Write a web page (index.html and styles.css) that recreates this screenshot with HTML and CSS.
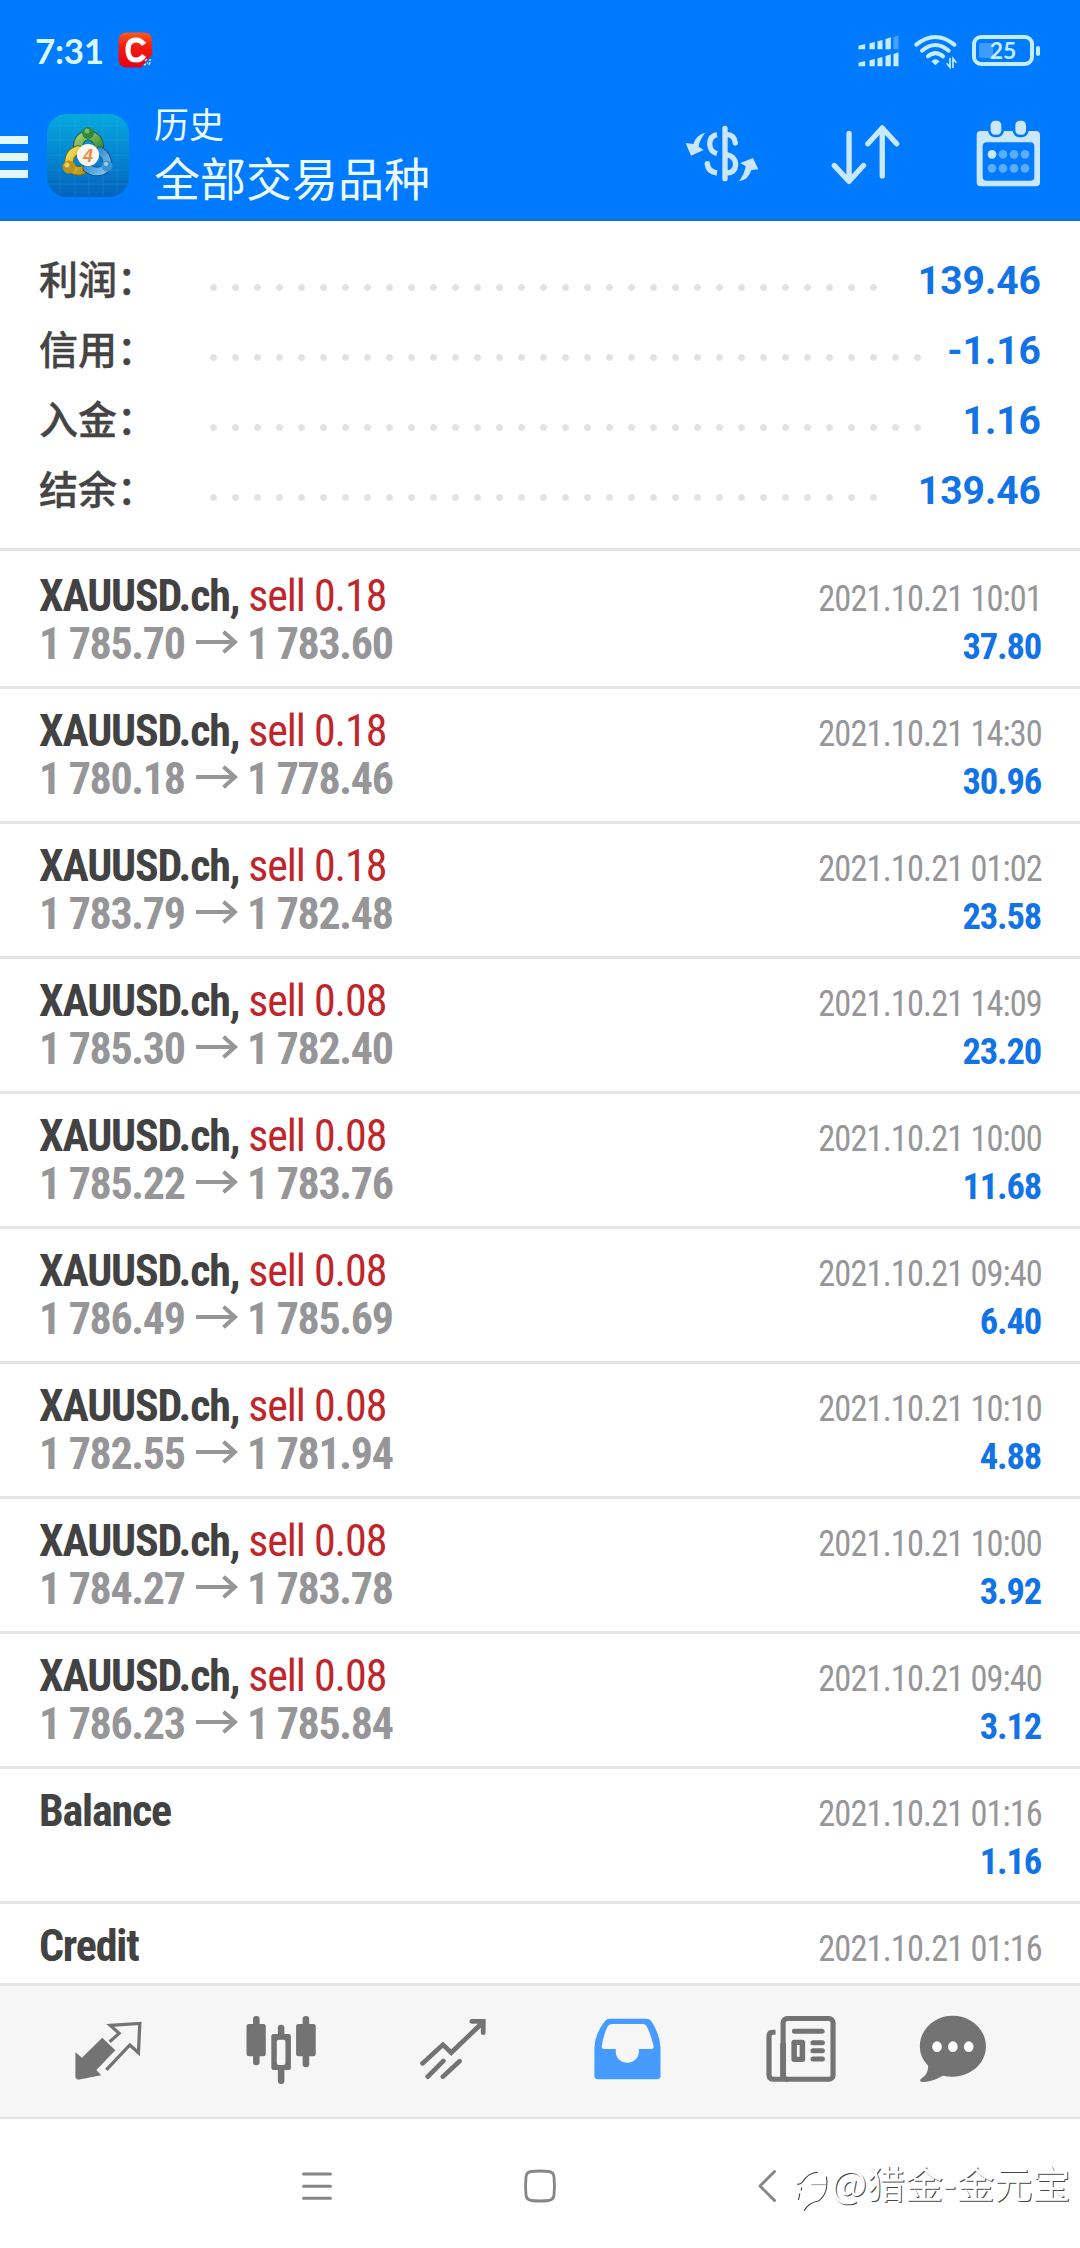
FILE: index.html
```html
<!DOCTYPE html>
<html lang="zh-CN">
<head>
<meta charset="utf-8">
<title>历史</title>
<link rel="stylesheet" href="styles.css">
</head>
<body>
<svg class="defs" aria-hidden="true"><symbol id="arrow" viewBox="0 0 42 24"><path d="M0 12H39M27.500 1.800L39 12L27.500 22.200" fill="none" stroke="#969698" stroke-width="4"/></symbol></svg>
<header class="header">
  <div class="status">
    <span class="clock">7:31</span>
    <svg class="notif" viewBox="0 0 35 36"><defs><linearGradient id="r" x1="0" y1="0" x2="0" y2="1"><stop offset="0" stop-color="#fb5a1e"/><stop offset=".4" stop-color="#f31c10"/><stop offset="1" stop-color="#e60012"/></linearGradient></defs><path d="M9 0.500H26Q34 .5 34 9V23L23 35.500H9Q.5 35.500 .5 27V9Q.5 .5 9 .5Z" fill="url(#r)"/><path d="M26 12.500Q23 8 18 8Q10 8 10 17.500Q10 28 18 28Q23 28 26 23.500" fill="none" stroke="#fff" stroke-width="5"/><path d="M27 29l2-2M31 28l2 0M26 33l2-1M31 33l1-3M29 31h1" stroke="#cfe6ff" stroke-width="1.500"/></svg>
    <svg class="signal" viewBox="656 104 122 96"><g fill="#c4edff"><path d="M657 136l20-5v16h-20zM690 129l16-4v22h-16zM714 123l15-4v28h-15zM738 116l16-5v36h-16zM657 187l20-5v16h-20zM690 180l16-4v22h-16zM714 174l15-4v28h-15zM738 167l16-5v36h-16zM762 161l15-5v42h-15z"/><path d="M762 110l15-5v42h-15z" opacity=".35"/></g></svg>
    <svg class="wifi" viewBox="824 102 129 105"><g fill="none" stroke="#c4edff" stroke-width="12" stroke-linecap="round"><path d="M831 134Q888 88 945 134M848 152Q888 118 928 152M866 169Q888 150 911 169"/></g><path d="M876 184Q888 172 901 184L888 196Z" fill="#c4edff"/><path d="M932 174V202L922 190M941 204V176L951 188" fill="none" stroke="#c4edff" stroke-width="5"/></svg>
    <svg class="battery" viewBox="0 0 69 32"><rect x="2" y="2" width="58" height="27" rx="7" fill="none" stroke="#c4edff" stroke-width="4"/><rect x="7" y="8" width="14" height="15" rx="2" fill="#3d9cff"/><rect x="64" y="11" width="4" height="10" rx="2" fill="#c4edff"/><text class="battery-text" x="31" y="24" text-anchor="middle">25</text></svg>
  </div>
  <div class="toolbar">
    <div class="burger"><i></i><i></i><i></i></div>
    <svg class="logo" viewBox="0 0 82 83"><defs><linearGradient id="lg" x1="0" y1="0" x2="0" y2="1"><stop offset="0" stop-color="#06a9e0"/><stop offset="1" stop-color="#0563be"/></linearGradient><linearGradient id="gg" x1="0" y1="0" x2="1" y2="1"><stop offset="0" stop-color="#a4cf72"/><stop offset="1" stop-color="#2f8a35"/></linearGradient><linearGradient id="yg" x1="0" y1="0" x2="1" y2="1"><stop offset="0" stop-color="#f4e25d"/><stop offset="1" stop-color="#b58d12"/></linearGradient><linearGradient id="bg" x1="0" y1="0" x2="1" y2="1"><stop offset="0" stop-color="#1f78bf"/><stop offset="1" stop-color="#7cc4ee"/></linearGradient></defs>
    <rect width="82" height="83" rx="20" fill="url(#lg)"/><path d="M13 2V81M28 1V82M42 1V82M56 1V82M70 2V81M1 12H81M1 26H81M1 41H81M1 56H81M1 70H81" stroke="#47c1ec" stroke-opacity=".16" stroke-width="1" fill="none"/>
    <g fill="none" stroke-linecap="round"><path d="M31 36Q30 23 41 21Q53 23 52 36" stroke="#1c5e3a" stroke-width="10"/><path d="M31 36Q30 23 41 21Q53 23 52 36" stroke="url(#gg)" stroke-width="8"/><path d="M22 52Q21 39 31 36M24 54Q32 60 39 54" stroke="#6e671d" stroke-width="9.500"/><path d="M22 52Q21 39 31 36M24 54Q32 60 39 54" stroke="url(#yg)" stroke-width="7.500"/><path d="M60 51Q61 42 53 37M59 54Q51 61 40 54" stroke="#124f8c" stroke-width="9.500"/><path d="M60 51Q61 42 53 37M59 54Q51 61 40 54" stroke="url(#bg)" stroke-width="7.500"/></g>
    <circle cx="41" cy="19" r="6" fill="#2f8a3a"/><circle cx="40" cy="17" r="2.500" fill="#79b967"/><circle cx="22" cy="53" r="6.500" fill="#b9921f"/><circle cx="20" cy="51" r="2.500" fill="#e8cf62"/><circle cx="60" cy="52" r="5.500" fill="#3f93cf"/><circle cx="59" cy="50" r="2" fill="#9bd5f5"/><circle cx="41" cy="41" r="11" fill="#fbf7f2"/><text class="logo-text" x="41" y="47.500" text-anchor="middle">4</text></svg>
    <div class="titles"><div class="title-small">历史</div><div class="title-big">全部交易品种</div></div>
    <svg class="currency" viewBox="135 374 222 174"><g fill="none" stroke="#cbe6ff" stroke-width="16"><path d="M231 403Q209 407 209 431Q210 454 231 460M202 490Q204 514 231 518"/><path d="M202 490V491M286 428Q284 404 260 402M260 463Q287 469 287 493Q285 517 260 518M255 384V535" stroke-linecap="round"/></g><path d="M196 397Q168 404 160 431L137 428L153 466L191 449L176 439Q179 416 196 397ZM297 543Q326 538 334 509L355 507L339 473L301 488L317 498Q313 522 297 543Z" fill="#cbe6ff"/></svg>
    <svg class="sort" viewBox="572 372 206 182"><path d="M626 400V543M582 496L626 543L669 496M725 527V384M682 431L725 384L768 431" fill="none" stroke="#c8e8ff" stroke-width="16" stroke-linecap="round" stroke-linejoin="round"/></svg>
    <svg class="calendar" viewBox="1008 360 195 201"><path fill-rule="evenodd" fill="#cbe6ff" d="M1022 393H1188Q1200 393 1200 405V546Q1200 559 1188 559H1022Q1010 559 1010 546V405Q1010 393 1022 393ZM1040 427Q1028 427 1028 439V530Q1028 542 1040 542H1171Q1183 542 1183 530V439Q1183 427 1171 427Z"/><g fill="#cbe6ff" stroke="#007aff" stroke-width="8"><rect x="1048" y="358" width="40" height="50" rx="17"/><rect x="1122" y="358" width="40" height="50" rx="17"/></g><circle cx="1056" cy="463" r="13" fill="#cbe6ff"/><g fill="#5cadff"><circle cx="1089" cy="463" r="13"/><circle cx="1122" cy="463" r="13"/><circle cx="1155" cy="463" r="13"/><circle cx="1056" cy="505" r="13"/><circle cx="1089" cy="505" r="13"/><circle cx="1122" cy="505" r="13"/><circle cx="1155" cy="505" r="13"/></g></svg>
  </div>
</header>
<section class="summary">
  <div class="sum"><span class="label">利润：</span><span class="dots"></span><span class="value">139.46</span></div>
  <div class="sum"><span class="label">信用：</span><span class="dots wide"></span><span class="value">-1.16</span></div>
  <div class="sum"><span class="label">入金：</span><span class="dots wide"></span><span class="value">1.16</span></div>
  <div class="sum"><span class="label">结余：</span><span class="dots"></span><span class="value">139.46</span></div>
</section>
<main class="list">
  <div class="item"><div class="left"><div class="name">XAUUSD.ch, <span class="sell">sell 0.18</span></div><div class="price"><span class="from">1 785.70</span><svg class="arrow"><use href="#arrow"/></svg><span>1 783.60</span></div></div><div class="right"><div class="date">2021.10.21 10:01</div><div class="profit">37.80</div></div></div>
  <div class="item"><div class="left"><div class="name">XAUUSD.ch, <span class="sell">sell 0.18</span></div><div class="price"><span class="from">1 780.18</span><svg class="arrow"><use href="#arrow"/></svg><span>1 778.46</span></div></div><div class="right"><div class="date">2021.10.21 14:30</div><div class="profit">30.96</div></div></div>
  <div class="item"><div class="left"><div class="name">XAUUSD.ch, <span class="sell">sell 0.18</span></div><div class="price"><span class="from">1 783.79</span><svg class="arrow"><use href="#arrow"/></svg><span>1 782.48</span></div></div><div class="right"><div class="date">2021.10.21 01:02</div><div class="profit">23.58</div></div></div>
  <div class="item"><div class="left"><div class="name">XAUUSD.ch, <span class="sell">sell 0.08</span></div><div class="price"><span class="from">1 785.30</span><svg class="arrow"><use href="#arrow"/></svg><span>1 782.40</span></div></div><div class="right"><div class="date">2021.10.21 14:09</div><div class="profit">23.20</div></div></div>
  <div class="item"><div class="left"><div class="name">XAUUSD.ch, <span class="sell">sell 0.08</span></div><div class="price"><span class="from">1 785.22</span><svg class="arrow"><use href="#arrow"/></svg><span>1 783.76</span></div></div><div class="right"><div class="date">2021.10.21 10:00</div><div class="profit">11.68</div></div></div>
  <div class="item"><div class="left"><div class="name">XAUUSD.ch, <span class="sell">sell 0.08</span></div><div class="price"><span class="from">1 786.49</span><svg class="arrow"><use href="#arrow"/></svg><span>1 785.69</span></div></div><div class="right"><div class="date">2021.10.21 09:40</div><div class="profit">6.40</div></div></div>
  <div class="item"><div class="left"><div class="name">XAUUSD.ch, <span class="sell">sell 0.08</span></div><div class="price"><span class="from">1 782.55</span><svg class="arrow"><use href="#arrow"/></svg><span>1 781.94</span></div></div><div class="right"><div class="date">2021.10.21 10:10</div><div class="profit">4.88</div></div></div>
  <div class="item"><div class="left"><div class="name">XAUUSD.ch, <span class="sell">sell 0.08</span></div><div class="price"><span class="from">1 784.27</span><svg class="arrow"><use href="#arrow"/></svg><span>1 783.78</span></div></div><div class="right"><div class="date">2021.10.21 10:00</div><div class="profit">3.92</div></div></div>
  <div class="item"><div class="left"><div class="name">XAUUSD.ch, <span class="sell">sell 0.08</span></div><div class="price"><span class="from">1 786.23</span><svg class="arrow"><use href="#arrow"/></svg><span>1 785.84</span></div></div><div class="right"><div class="date">2021.10.21 09:40</div><div class="profit">3.12</div></div></div>
  <div class="item"><div class="left"><div class="name">Balance</div></div><div class="right"><div class="date">2021.10.21 01:16</div><div class="profit">1.16</div></div></div>
  <div class="item"><div class="left"><div class="name">Credit</div></div><div class="right"><div class="date">2021.10.21 01:16</div></div></div>
</main>
<nav class="tabs">
  <svg viewBox="197.500 90 232.300 225" preserveAspectRatio="none"><path d="M297 173L335 211L280 270L294 286L226 299L219 293V217L238 233Z" fill="#737373"/><path d="M322 182L346 160L320 136L406 130L402 218L377 195L312 266" fill="none" stroke="#737373" stroke-width="9.500" stroke-linecap="square"/></svg>
  <svg viewBox="700 90 232.300 225" preserveAspectRatio="none"><g fill="#737373"><rect x="735" y="108" width="19" height="148" rx="9"/><rect x="716" y="132" width="56" height="97" rx="7"/><rect x="879" y="108" width="19" height="154" rx="9"/><rect x="860" y="132" width="57" height="97" rx="7"/><rect x="807" y="134" width="19" height="178" rx="9"/><rect x="788" y="162" width="57" height="108" rx="7"/></g><rect x="804" y="179" width="25" height="76" rx="6" fill="#f6f6f6"/></svg>
  <svg viewBox="1205 90 232.300 225" preserveAspectRatio="none"><g fill="none" stroke="#737373" stroke-width="14" stroke-linecap="round"><path d="M1230 250L1289 194L1313 218L1406 126M1373 124H1406V158M1245 290L1290 243M1289 290L1337 244"/></g></svg>
  <svg viewBox="139.400 90 232.300 225" preserveAspectRatio="none"><path fill-rule="evenodd" fill="#459bff" d="M202 116H308Q318 116 323 123Q348 162 350 203V288Q350 298 338 298H170Q158 298 158 288V203Q160 158 189 123Q194 116 202 116ZM209 132Q200 132 196 140Q184 165 179 200Q179 207 186 207H220V215A33 33 0 0 0 287 215V207H324Q331 207 330 199Q321 160 309 137Q306 132 299 132Z"/></svg>
  <svg viewBox="641.800 90 232.300 225" preserveAspectRatio="none"><g fill="none" stroke="#737373" stroke-width="15"><rect x="706" y="115.500" width="145" height="182" rx="12"/><path d="M684 157H676Q665 157 665 170V284Q665 298 680 298H720"/><path d="M706 190V297" stroke-width="17"/></g><g fill="none" stroke="#737373" stroke-width="15" stroke-linecap="round"><path d="M739 154H819M793 188H820M793 212H820M793 237H820"/></g><rect x="738" y="187" width="24" height="51" fill="none" stroke="#737373" stroke-width="16" stroke-linejoin="round"/></svg>
  <svg class="chat" viewBox="1083.200 90 232.300 225" preserveAspectRatio="none"><path d="M1198 107C1253 107 1295 149 1295 199C1295 251 1251 290 1198 290Q1183 290 1170 287Q1138 306 1108 306Q1101 303 1106 297Q1129 281 1127 257Q1103 233 1103 199C1103 149 1145 107 1198 107Z" fill="#737373"/><g fill="#fff"><ellipse cx="1153" cy="200" rx="14" ry="16"/><ellipse cx="1199" cy="200" rx="14" ry="16"/><ellipse cx="1245" cy="200" rx="14" ry="16"/></g></svg>
</nav>
<footer class="sysnav">
  <svg class="recent" viewBox="0 0 30 34"><path d="M1.500 5H28.500M1.500 17.200H28.500M1.500 29.300H28.500" stroke="#868686" stroke-width="3" stroke-linecap="round"/></svg>
  <svg class="home" viewBox="0 0 34 34"><path d="M8 2.500Q17 1.500 26 2.500Q30.500 3 31 8Q32 17 31 26Q30.500 30.500 26 31.500Q17 32.500 8 31.500Q3.500 30.500 3 26Q2 17 3 8Q3.500 3 8 2.500Z" fill="none" stroke="#868686" stroke-width="2.800"/></svg>
  <svg class="back" viewBox="0 0 20 34"><path d="M17.500 2.500L3 17L17.500 31.500" fill="none" stroke="#868686" stroke-width="3" stroke-linecap="round" stroke-linejoin="round"/></svg>
  <div class="mark"><svg class="swirl" viewBox="742 570 104 126" preserveAspectRatio="none"><g fill="none" stroke="#3a3a3a" stroke-width="3"><path d="M748 612Q754 615 763 607Q780 578 808 577M762 622L759 631M756 640L752 660M833 590Q840 640 810 663Q783 667 768 692"/><path d="M789 614H833" stroke="#999"/></g></svg><span>@猎金-金元宝</span></div>
</footer>
</body>
</html>
```
FILE: styles.css
```css
* { box-sizing: border-box; }
body { margin: 0; width: 1080px; height: 2248px; display: flex; flex-direction: column; overflow: hidden; background: #fff; font-family: Roboto, "Noto Sans CJK SC", sans-serif; }
svg { display: block; flex: none; }
.defs { width: 0; height: 0; position: absolute; }
.header { height: 221px; flex: none; background: #007aff; border-bottom: 2px solid #1a6fcb; color: #eafaff; }
.status { height: 102px; display: flex; align-items: flex-start; padding: 32px 39px 0 35px; }
.clock { width: 83px; font: 700 35px/36px Lato, sans-serif; letter-spacing: -0.3px; white-space: nowrap; color: #d8f8ff; }
.notif { width: 35px; height: 36px; }
.signal { width: 41px; height: 32px; margin: 3px 0 0 auto; }
.wifi { width: 43px; height: 35px; margin: 2px 0 0 15px; }
.battery { width: 69px; height: 32px; margin: 3px 0 0 15px; }
.battery-text { font: 700 23px Lato, sans-serif; fill: #c4edff; }
.toolbar { height: 117px; display: flex; align-items: flex-start; }
.burger { width: 28px; padding-top: 34px; display: flex; flex-direction: column; gap: 9px; }
.burger i { height: 8px; background: #e4f7ff; }
.logo { width: 82px; height: 83px; margin: 12px 0 0 19px; }
.logo-text { font: italic 700 18px "Liberation Sans", sans-serif; fill: #ef8b3a; }
.titles { margin-left: 25px; font-family: "Noto Sans CJK SC", sans-serif; font-weight: 400; white-space: nowrap; }
.title-small { font-size: 35px; line-height: 41px; }
.title-big { font-size: 46px; line-height: 66px; }
.currency { width: 74px; height: 58px; margin: 23px 0 0 auto; }
.sort { width: 69px; height: 61px; margin: 22px 0 0 72px; }
.calendar { width: 65px; height: 67px; margin: 18px 39px 0 76px; }
.summary { height: 330px; flex: none; padding: 24px 38px 0 39px; border-bottom: 3px solid #e5e5e5; }
.sum { height: 70px; display: flex; align-items: flex-start; }
.label { width: 164px; font: 500 39px/64px "Noto Sans CJK SC", sans-serif; color: #444; -webkit-text-stroke: 0.4px #444; white-space: nowrap; }
.dots { width: 682px; height: 7px; margin-top: 39px; background: radial-gradient(circle at 10.5px 3.500px, #e2e2e2 3px, transparent 3.800px) 0 0 / 22px 7px repeat-x; }
.dots.wide { width: 726px; }
.value { margin-left: auto; font: 700 39px/46px Roboto, sans-serif; padding: 13px 1px 0 0; color: #1273e6; white-space: nowrap; }
.list { flex: none; height: 1432px; padding-top: 3px; overflow: hidden; font-family: "Roboto Condensed", Roboto, sans-serif; font-stretch: 75%; }
.item { height: 135px; border-bottom: 3px solid #e5e5e5; padding: 18px 38px 0 39px; display: flex; justify-content: space-between; white-space: nowrap; }
.name { font-size: 44px; line-height: 48px; font-weight: 700; letter-spacing: -1.200px; color: #424242; }
.sell { font-weight: 400; letter-spacing: -1.050px; color: #bf262b; }
.price { display: flex; font-size: 44px; line-height: 48px; font-weight: 700; letter-spacing: -1.350px; color: #969698; }
.from { width: 157px; }
.arrow { width: 42px; height: 24px; margin: 10px 9px 0 0; }
.right { padding-top: 3px; text-align: right; font-size: 36.500px; line-height: 48px; }
.date { color: #969698; letter-spacing: -0.900px; transform: scaleX(.94); transform-origin: right; }
.profit { color: #1273e6; font-weight: 700; letter-spacing: -1.200px; padding-right: 1px; }
.tabs { height: 136px; flex: none; background: #f6f6f6; border-top: 3px solid #e4e4e4; border-bottom: 2px solid #e4e4e4; display: flex; gap: 93.200px; padding: 24px 0 0 68px; }
.tabs svg { width: 80px; height: 75px; }
.tabs .chat { margin-left: -21px; }
.sysnav { flex: 1; display: flex; align-items: flex-start; padding: 50px 0 0 302px; }
.recent { width: 30px; height: 34px; }
.home { width: 34px; height: 34px; margin-left: 191px; }
.back { width: 20px; height: 34px; margin-left: 200px; }
.mark { display: flex; margin: -12px 0 0 18px; font: 400 38px/50px "Noto Sans CJK SC", sans-serif; color: #fff; text-shadow: 1px 1px 0 #444; white-space: nowrap; }
.swirl { width: 36px; height: 42px; margin-top: 13px; }
```
